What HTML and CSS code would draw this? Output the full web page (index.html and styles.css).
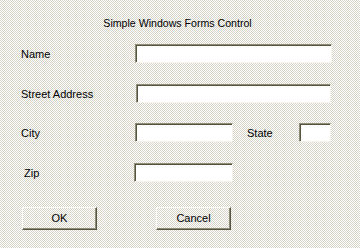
FILE: index.html
```html
<!DOCTYPE html>
<html>
<head>
<meta charset="utf-8">
<link rel="stylesheet" href="styles.css">
</head>
<body>
<div class="window">
  <div class="title">Simple Windows Forms Control</div>
  <div class="form">
    <div class="row row-name">
      <label class="label">Name</label>
      <div class="textbox wide"></div>
    </div>
    <div class="row row-street">
      <label class="label">Street Address</label>
      <div class="textbox wide street"></div>
    </div>
    <div class="row row-city">
      <label class="label">City</label>
      <div class="textbox medium"></div>
      <label class="label state-label">State</label>
      <div class="textbox small"></div>
    </div>
    <div class="row row-zip">
      <label class="label zip-label">Zip</label>
      <div class="textbox medium zip"></div>
    </div>
    <div class="buttons">
      <div class="button ok">OK</div>
      <div class="button cancel">Cancel</div>
    </div>
  </div>
</div>
</body>
</html>
```
FILE: styles.css
```css
html, body {
  margin: 0;
  padding: 0;
}
body {
  width: 360px;
  height: 248px;
  overflow: hidden;
  font-family: "Liberation Sans", Arial, sans-serif;
  font-size: 11px;
  color: #000;
  background: repeating-conic-gradient(#ffffff 0 25%, #d6d3c9 0 50%) 0 0 / 2px 2px;
}
.window {
  width: 360px;
  height: 248px;
}
.title {
  padding-top: 16px;
  height: 14px;
  line-height: 14px;
  text-align: center;
  padding-right: 5px;
  font-size: 10.6px;
}
.form {
  padding-left: 21px;
}
.row {
  display: flex;
  align-items: center;
  height: 19px;
}
.row-name { margin-top: 14px; }
.row-street { margin-top: 21px; }
.row-city { margin-top: 20px; }
.row-zip { margin-top: 21px; }
.label {
  width: 114px;
  flex: none;
  line-height: 14px;
}
.zip-label {
  width: 110px;
  padding-left: 3px;
}
.textbox {
  box-sizing: border-box;
  height: 19px;
  background: #fff;
  border-top: 1px solid #8e8c78;
  border-left: 1px solid #8e8c78;
  border-right: 1px solid #f6f4ea;
  border-bottom: 1px solid #f6f4ea;
  box-shadow: inset 1px 1px 0 #55543f;
  flex: none;
}
.wide { width: 197px; }
.street { margin-left: 1px; width: 195px; }
.medium { width: 98px; }
.zip { width: 99px; }
.small { width: 32px; }
.state-label {
  width: 52px;
  margin-left: 14px;
}
.buttons {
  display: flex;
  margin-top: 25px;
  padding-left: 1px;
}
.button {
  box-sizing: border-box;
  width: 75px;
  height: 23px;
  line-height: 20px;
  text-align: center;
  border-top: 1px solid #fbfaf4;
  border-left: 1px solid #fbfaf4;
  border-right: 1px solid #55543f;
  border-bottom: 1px solid #55543f;
  box-shadow: inset -1px -1px 0 #8e8c78;
}
.cancel {
  margin-left: 59px;
}
```
